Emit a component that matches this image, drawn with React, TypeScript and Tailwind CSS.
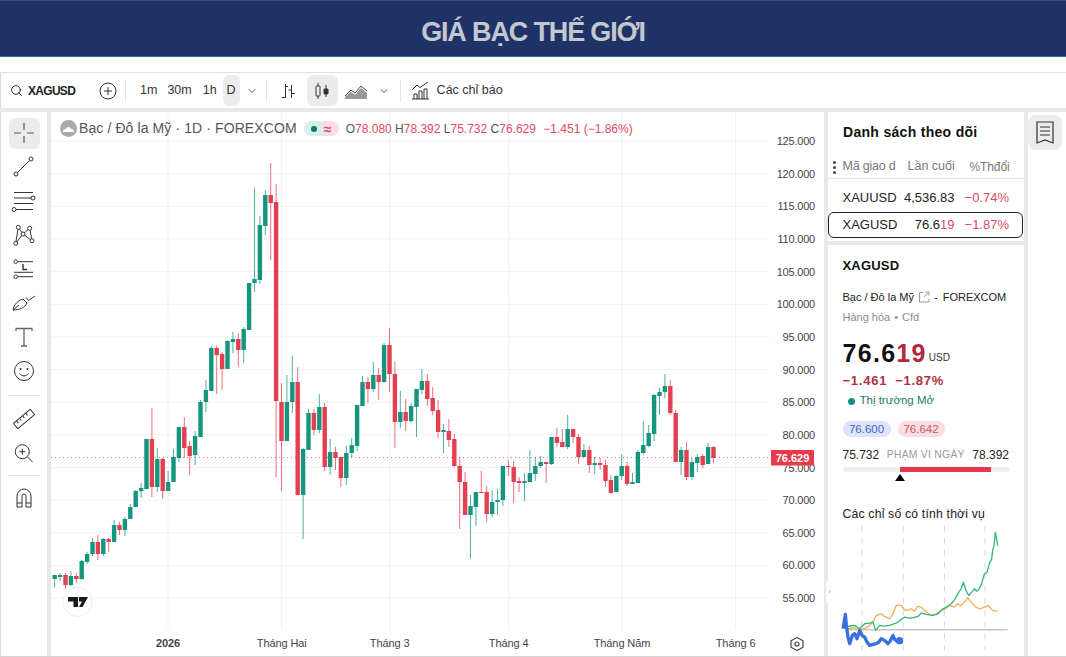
import { ChevronDown, Search } from 'lucide-react';

// top, bottom, wick top, wick bottom, 1 = green / 0 = red (y in page pixels)
const candles: [number, number, number, number, number][] = [
  [575, 579, 575, 587, 1], [575, 577, 573, 581, 1], [575, 585, 573, 589, 0], [576, 585, 571, 586, 1], [576, 579, 573, 583, 0],
  [561, 579, 560, 580, 1], [554, 562, 552, 564, 1], [542, 554, 538, 556, 1], [542, 554, 535, 560, 0], [539, 554, 538, 556, 1],
  [539, 542, 538, 552, 0], [525, 542, 520, 542, 1], [525, 530, 522, 535, 0], [519, 530, 517, 536, 1], [507, 519, 504, 519, 1],
  [491, 507, 490, 507, 1], [488, 491, 483, 498, 1], [439, 489, 439, 489, 1], [439, 487, 408, 497, 0], [459, 487, 448, 492, 1],
  [459, 491, 458, 499, 0], [482, 491, 471, 491, 1], [457, 482, 449, 482, 1], [427, 458, 427, 462, 1], [427, 448, 417, 458, 0],
  [446, 456, 441, 475, 0], [436, 455, 431, 465, 1], [402, 437, 400, 437, 1], [390, 402, 380, 412, 1], [348, 391, 346, 391, 1],
  [348, 355, 346, 394, 0], [354, 369, 352, 390, 0], [341, 369, 340, 369, 1], [339, 342, 332, 353, 1], [339, 350, 333, 367, 0],
  [329, 350, 327, 363, 1], [283, 330, 283, 330, 1], [279, 283, 188, 292, 1], [225, 280, 216, 284, 1], [195, 226, 190, 235, 1],
  [195, 203, 163, 260, 0], [202, 401, 184, 477, 0], [402, 441, 383, 491, 0], [402, 441, 375, 441, 1], [382, 402, 356, 413, 1],
  [382, 495, 367, 495, 0], [449, 495, 448, 539, 1], [413, 450, 409, 450, 1], [413, 430, 409, 435, 0], [407, 430, 394, 433, 1],
  [407, 467, 403, 471, 0], [452, 467, 439, 475, 1], [452, 458, 447, 470, 0], [457, 478, 457, 487, 0], [453, 478, 446, 485, 1],
  [445, 453, 438, 458, 1], [405, 446, 405, 451, 1], [382, 406, 376, 406, 1], [382, 389, 377, 403, 0], [375, 389, 362, 392, 1],
  [375, 382, 368, 400, 0], [345, 382, 343, 383, 1], [345, 374, 328, 392, 0], [374, 422, 362, 448, 0], [412, 422, 391, 428, 1],
  [412, 421, 399, 431, 0], [406, 421, 403, 423, 1], [389, 407, 389, 437, 1], [381, 390, 369, 394, 1], [381, 399, 374, 406, 0],
  [398, 411, 387, 415, 0], [410, 432, 400, 438, 0], [430, 432, 424, 453, 1], [431, 440, 419, 447, 0], [439, 466, 434, 467, 0],
  [466, 482, 457, 529, 0], [482, 515, 472, 515, 0], [506, 515, 495, 559, 1], [492, 507, 492, 526, 1], [492, 493, 471, 493, 0],
  [492, 514, 486, 522, 0], [502, 514, 490, 517, 1], [500, 502, 489, 515, 1], [466, 500, 466, 506, 1], [466, 467, 460, 476, 0],
  [467, 482, 461, 503, 0], [481, 483, 477, 492, 0], [481, 483, 473, 501, 1], [473, 482, 450, 482, 1], [466, 474, 457, 481, 1],
  [462, 466, 456, 468, 1], [462, 464, 462, 483, 0], [437, 464, 437, 465, 1], [437, 443, 428, 447, 0], [442, 447, 429, 447, 0],
  [429, 447, 415, 449, 1], [429, 437, 429, 443, 0], [437, 457, 434, 464, 0], [450, 457, 444, 457, 1], [450, 465, 446, 473, 0],
  [463, 465, 457, 474, 1], [463, 465, 458, 470, 0], [465, 481, 460, 487, 0], [480, 493, 475, 494, 0], [476, 492, 475, 492, 1],
  [466, 476, 454, 480, 1], [466, 484, 462, 486, 0], [482, 484, 473, 484, 1], [452, 483, 450, 483, 1], [445, 453, 421, 455, 1],
  [433, 446, 425, 447, 1], [395, 434, 394, 441, 1], [392, 396, 388, 415, 1], [386, 392, 374, 398, 1], [386, 413, 380, 415, 0],
  [413, 462, 410, 462, 0], [450, 462, 447, 475, 1], [450, 477, 442, 480, 0], [462, 477, 458, 480, 1], [457, 463, 454, 472, 1],
  [456, 465, 454, 468, 0], [447, 464, 443, 464, 1], [447, 458, 446, 463, 0],
];

const priceLabels = ['125.000', '120.000', '115.000', '110.000', '105.000', '100.000', '95.000', '90.000', '85.000', '80.000', '75.000', '70.000', '65.000', '60.000', '55.000'];
const timeLabels: [number, string, boolean][] = [[168, '2026', true], [281.7, 'Tháng Hai', false], [389.7, 'Tháng 3', false], [508.7, 'Tháng 4', false], [622, 'Tháng Năm', false], [735.6, 'Tháng 6', false]];

const greenLine = '65,398 75,396 85,395 100,405 115,390 130,388 140,385 148,410 160,395 175,397 190,395 205,390 215,385 235,370 250,373 260,372 275,368 285,358 300,362 320,365 335,360 350,345 365,338 375,330 385,318 395,300 405,285 412,265 420,290 428,305 437,295 445,285 452,292 460,285 468,265 475,240 483,235 490,210 497,195 500,170 505,150 508,115 512,135 515,155';
const orangeLine = '65,405 80,402 100,408 115,405 130,395 140,385 150,365 165,360 175,368 190,375 200,360 210,335 225,335 235,348 245,350 255,345 265,352 275,338 285,340 295,350 305,358 315,365 330,360 345,350 358,345 370,335 385,340 395,330 405,335 415,325 425,312 435,325 450,340 460,345 470,342 487,335 495,345 500,350 515,353';
const blueLine = '50,405 54,380 57,362 60,395 65,430 70,450 78,425 85,420 92,435 100,410 107,425 115,430 122,445 130,455 140,452 150,450 158,445 165,435 175,440 185,450 192,442 200,425 206,438 212,442 225,441';

const Tool = ({ children }: { children: React.ReactNode }) => (
  <div className="h-[34px] w-full flex items-center justify-center">
    <svg width="28" height="28" viewBox="0 0 28 28" fill="none" stroke="#333" strokeWidth="1">{children}</svg>
  </div>
);

const ToolBar = () => (
  <div className="w-[47px] shrink-0 bg-white border-l border-[#d9d9d9] flex flex-col items-center pt-1">
    <div className="h-[34px] w-full flex items-center justify-center">
      <div className="w-[31px] h-[31px] rounded-md bg-[#ececec] flex items-center justify-center">
        <svg width="24" height="24" viewBox="0 0 24 24" stroke="#555" strokeWidth="1.2">
          <path d="M12 2v7M12 15v7M2 12h7M15 12h7" />
        </svg>
      </div>
    </div>
    <Tool>
      <path d="M7.5 19.5L19.5 7.5" />
      <circle cx="6" cy="21" r="2" />
      <circle cx="21" cy="6" r="2" />
    </Tool>
    <Tool>
      <path d="M4 5.5h19M4 11h17M4 16.5h19M6 22.5h17" />
      <circle cx="23" cy="11" r="2" fill="#fff" />
      <circle cx="4" cy="22.5" r="2" fill="#fff" />
    </Tool>
    <Tool>
      <path d="M5.7 22.3L8.3 6.3L13 13L19.7 7.3L22 19.7L13 13L5.7 22.3" />
      <circle cx="8.3" cy="6.3" r="2" fill="#fff" />
      <circle cx="19.7" cy="7.3" r="2" fill="#fff" />
      <circle cx="5.7" cy="22.3" r="2" fill="#fff" />
      <circle cx="22" cy="19.7" r="2" fill="#fff" />
      <circle cx="13" cy="13" r="2" fill="#fff" />
    </Tool>
    <Tool>
      <path d="M8 6.7h15M4 17.3h19M8 21.7h15" />
      <circle cx="5.7" cy="6.7" r="1.8" />
      <circle cx="5.7" cy="21.7" r="1.8" />
      <path d="M13 9v5.5h4" strokeWidth="1.4" />
    </Tool>
    <Tool>
      <path d="M3 21C4 15 9 11 13 10l4 4C15 19 9 21 3 21z" />
      <path d="M3 21l6-5M16 8.5l2.5 3L25 7" />
    </Tool>
    <Tool>
      <path d="M6 8V5.5h16V8M14 5.5V23M11 23h6" stroke="#666" strokeWidth="1.3" />
    </Tool>
    <Tool>
      <circle cx="14" cy="14" r="9.5" />
      <circle cx="10.5" cy="12" r="1" fill="#333" stroke="none" />
      <circle cx="17.5" cy="12" r="1" fill="#333" stroke="none" />
      <path d="M9.5 16.5c2 3 7 3 9 0" />
    </Tool>
    <div className="mt-[7px] mb-[6px] h-px w-[32px] bg-[#e3e3e3]" />
    <Tool>
      <g transform="rotate(-40 14 14)">
        <rect x="3" y="10.5" width="22" height="7" rx="0.5" />
        <path d="M7 10.5v3M11 10.5v3M15 10.5v3M19 10.5v3" />
      </g>
    </Tool>
    <Tool>
      <circle cx="12.3" cy="12.7" r="7" />
      <path d="M9.3 12.7h6M12.3 9.7v6M17.5 18l5 5" />
    </Tool>
    <div className="mt-[5px] mb-[5px] h-px w-[32px] bg-[#e3e3e3]" />
    <Tool>
      <path d="M7 23V12a7 7 0 0 1 14 0v11h-5V12a2 2 0 0 0-4 0v11z" />
      <path d="M7 19h5M16 19h5" />
    </Tool>
  </div>
);

const Chart = () => (
  <div className="relative w-[773px] shrink-0 bg-white">
    <svg className="block" width="773" height="544" viewBox="51 112 773 544">
      {priceLabels.map((_, i) => (
        <line key={i} x1="51" x2="770" y1={141 + i * 32.65} y2={141 + i * 32.65} stroke="#f2f3f5" />
      ))}
      {timeLabels.map(([x], i) => (
        <line key={i} x1={x} x2={x} y1="112" y2="630" stroke="#f0f1f3" />
      ))}
      <line x1="51" x2="771" y1="457.5" y2="457.5" stroke="#f0727e" strokeDasharray="1 3" />
      {candles.map(([top, bottom, wickTop, wickBottom, green], i) => {
        const x = 54.7 + i * 5.4;
        const color = green ? '#14957e' : '#e43f50';
        return (
          <g key={i} fill={color}>
            <rect x={x - 0.5} y={wickTop} width="1" height={wickBottom - wickTop} opacity="0.75" />
            <rect x={x - 2.2} y={top} width="4.4" height={bottom - top} />
          </g>
        );
      })}
      {priceLabels.map((label, i) => (
        <text key={label} x="815" y={145 + i * 32.65} textAnchor="end" fontSize="11" letterSpacing="-0.2" fill="#444">{label}</text>
      ))}
      <rect x="771" y="450" width="43" height="15.5" fill="#e83a4c" />
      <text x="792.5" y="461.5" textAnchor="middle" fontSize="11" fontWeight="700" fill="#fff">76.629</text>
      {timeLabels.map(([x, label, bold]) => (
        <text key={label} x={x} y="647" textAnchor="middle" fontSize="11" fontWeight={bold ? 700 : 400} letterSpacing="-0.1" fill="#444">{label}</text>
      ))}
      <path d="M797 637.5l6 3.3v6.4l-6 3.3l-6-3.3v-6.4z" fill="none" stroke="#444" strokeWidth="1.2" strokeLinejoin="round" />
      <circle cx="797" cy="644" r="2" fill="none" stroke="#444" strokeWidth="1.2" />
      <circle cx="77.5" cy="602" r="14.5" fill="#fff" stroke="#eeeeee" />
      <path d="M68 597h10v10h-4.5v-5.5H68zM79 597h9l-5.5 10h-3.5l3-5.5h-3z" fill="#1a1a1a" />
      <circle cx="81.5" cy="599.5" r="1.8" fill="#1a1a1a" />
    </svg>
    <div className="absolute left-[9px] top-[6px] flex items-center whitespace-nowrap">
      <div className="w-[17px] h-[17px] rounded-full bg-[#a9a9ae] flex items-center justify-center">
        <svg width="11" height="7" viewBox="0 0 11 7"><path d="M0 7a3 3 0 0 1 3-3a2.6 2.6 0 0 1 5 0a3 3 0 0 1 3 3z" fill="#fff" /></svg>
      </div>
      <span className="ml-[2px] text-[14px] text-[#555] tracking-[0.1px]">Bạc / Đô la Mỹ · 1D · FOREXCOM</span>
      <span className="ml-[7px] h-[15px] w-[35px] rounded-full bg-[linear-gradient(90deg,#d5efe9_50%,#fbdde6_50%)] flex items-center justify-center gap-[7px]">
        <span className="w-[6px] h-[6px] rounded-full bg-[#0b7b66]" />
        <span className="text-[14px] leading-none font-bold text-[#d14a72]">≈</span>
      </span>
      <span className="ml-[7px] text-[12px] text-[#df4a60]">
        <span className="text-[#555]">O</span>78.080 <span className="text-[#555]">H</span>78.392 <span className="text-[#555]">L</span>75.732 <span className="text-[#555]">C</span>76.629 <span className="ml-[4px]">−1.451 (−1.86%)</span>
      </span>
    </div>
  </div>
);

const Side = () => (
  <div className="w-[196px] shrink-0 flex flex-col gap-1 bg-[#e9e9ea]">
    <div className="h-[129px] bg-white">
      <div className="pl-[15px] pt-3 text-[14px] leading-[17px] font-bold text-[#111] tracking-[0.3px]">Danh sách theo dõi</div>
      <div className="relative mt-[18px] h-[20px] flex items-center pl-[14.5px] text-[12.5px] text-[#777] border-b border-[#e6e6e6] pb-1">
        <span className="absolute left-[5px] top-[2px] flex flex-col gap-[2px]">
          <i className="block w-[3px] h-[3px] rounded-full bg-[#444]" />
          <i className="block w-[3px] h-[3px] rounded-full bg-[#444]" />
          <i className="block w-[3px] h-[3px] rounded-full bg-[#444]" />
        </span>
        <span className="w-[65px] overflow-hidden whitespace-nowrap tracking-[-0.2px]">Mã giao d</span>
        <span className="w-[62px]">Lần cuối</span>
        <span className="text-[12px] tracking-[-0.1px]">%Thđổi</span>
      </div>
      <div className="mt-[8px] h-[22px] flex items-center pl-[14.5px] pr-[15px] justify-between text-[13px] text-[#222]">
        <span className="w-[60px]">XAUUSD</span>
        <span className="ml-auto">4,536.83</span>
        <span className="ml-[10px] text-[#de4a5e]">−0.74%</span>
      </div>
      <div className="mt-[3px] h-[26px] w-[195px] rounded-md border border-[#222] flex items-center pl-[13.5px] pr-[13px] text-[13px] text-[#222]">
        <span>XAGUSD</span>
        <span className="ml-auto">76.6<span className="text-[#de4a5e]">19</span></span>
        <span className="ml-[10px] text-[#de4a5e]">−1.87%</span>
      </div>
    </div>
    <div className="relative flex-1 bg-white pl-[14.5px] pr-[15px]">
      <div className="pt-[13px] text-[13px] leading-4 font-bold text-[#111] tracking-[0.2px]">XAGUSD</div>
      <div className="mt-[15px] h-4 flex items-center text-[11px] text-[#222] whitespace-nowrap">
        Bạc / Đô la Mỹ
        <svg className="ml-[4px]" width="12" height="12" viewBox="0 0 12 12" fill="none" stroke="#999">
          <path d="M5 1.5H1.5v9.5h9.5V8M6 6l5-5M7.5 1H11v3.5" />
        </svg>
        <span className="ml-[4px]">-</span>
        <span className="ml-[5px]">FOREXCOM</span>
      </div>
      <div className="mt-[4px] h-4 flex items-center text-[11px] text-[#8c8c8c]">
        Hàng hóa
        <span className="mx-[4px]">•</span>
        Cfd
      </div>
      <div className="mt-[14px] h-7 flex items-end">
        <span className="text-[25px] leading-7 font-bold text-[#111] tracking-[1.3px]">76.6<span className="text-[#b02a3c]">19</span></span>
        <span className="ml-[2px] text-[10px] leading-[18px] text-[#333]">USD</span>
      </div>
      <div className="mt-[6px] h-4 text-[13px] leading-4 font-bold text-[#b0303f] tracking-[0.75px] whitespace-nowrap">
        −1.461<span className="ml-[8px]">−1.87%</span>
      </div>
      <div className="mt-[4px] h-4 flex items-center text-[11.5px] text-[#1c7a68]">
        <span className="ml-[5px] w-[7px] h-[7px] rounded-full bg-[#16907a]" />
        <span className="ml-[5px]">Thị trường Mở</span>
      </div>
      <div className="mt-[12px] flex gap-[7px] text-[11.5px] leading-[16px]">
        <span className="w-[48px] text-center rounded-full bg-[#dce5fb] text-[#4863c6]">76.600</span>
        <span className="w-[47px] text-center rounded-full bg-[#fadee1] text-[#c95966]">76.642</span>
      </div>
      <div className="mt-[10px] h-4 flex items-center justify-between text-[12px] text-[#222]">
        <span>75.732</span>
        <span className="text-[10.3px] text-[#999] tracking-[0.3px]">PHẠM VI NGÀY</span>
        <span>78.392</span>
      </div>
      <div className="relative mt-[4px] h-[5px] w-[167px] bg-[#efefef] rounded-sm">
        <div className="absolute left-[57px] top-0 h-[5px] w-[91px] bg-[#e23a4a]" />
        <div className="absolute left-[52px] top-[7px] w-0 h-0 border-x-[5px] border-x-transparent border-b-[7px] border-b-black" />
      </div>
      <div className="mt-[34px] h-4 text-[12.2px] leading-4 text-[#222] tracking-[0.2px]">Các chỉ số có tính thời vụ</div>
      <svg className="mt-[2px] -ml-[6.5px] block" width="177" height="128" viewBox="30 90 530 385" fill="none">
        {[107, 231, 355, 477].map((x) => (
          <line key={x} x1={x} x2={x} y1="95" y2="470" stroke="#d8d8d8" strokeWidth="3" strokeDasharray="18 18" />
        ))}
        <line x1="60" x2="545" y1="408" y2="408" stroke="#c8c8c8" strokeWidth="4" />
        <polyline points={orangeLine} stroke="#f2ae55" strokeWidth="4" strokeLinejoin="round" />
        <polyline points={greenLine} stroke="#2fbb72" strokeWidth="4" strokeLinejoin="round" />
        <polyline points={blueLine} stroke="#3a6fe2" strokeWidth="10" strokeLinejoin="round" />
        <circle cx="220" cy="441" r="11" fill="#3a6fe2" />
      </svg>
      <div className="absolute -left-[2px] top-[336px] w-[7px] h-[22px] bg-white rounded-r flex items-center justify-center text-[8px] text-[#aaa]">›</div>
    </div>
  </div>
);

const App = () => {
  return (
    <div className="h-[657px] w-[1066px] overflow-hidden bg-white font-['Liberation_Sans',Arial,sans-serif]">
      <div className="h-[57px] pt-[8px] bg-[#1f3265] border-t border-[#3c4c78] border-b border-b-[#2a6f9c] flex items-center justify-center">
        <h1 className="text-[27px] font-bold text-[#c3c7cf] tracking-[-1.15px]">GIÁ BẠC THẾ GIỚI</h1>
      </div>
      <div className="mt-[15px] h-[585px] flex flex-col bg-[#e9e9ea] border-t border-[#e0e0e0] border-b border-b-[#d5d5d5]">
        <div className="h-[35px] shrink-0 flex items-center bg-white border-l border-[#d9d9d9] text-[12.5px] text-[#333]">
          <Search className="ml-[9px] shrink-0" size={13} strokeWidth={1.7} color="#222" />
          <span className="ml-[5px] w-[71px] text-[12px] font-bold text-[#222] tracking-[-0.7px]">XAGUSD</span>
          <svg width="18" height="18" viewBox="0 0 18 18" fill="none" stroke="#333" className="shrink-0">
            <circle cx="9" cy="9" r="8" />
            <path d="M9 5v8M5 9h8" />
          </svg>
          <i className="ml-[8px] h-[22px] w-px bg-[#e5e5e5]" />
          <span className="ml-[14px]">1m</span>
          <span className="ml-[10px]">30m</span>
          <span className="ml-[11px]">1h</span>
          <span className="ml-[6px] w-[17px] h-[31px] rounded-md bg-[#ececec] flex items-center justify-center">D</span>
          <ChevronDown className="ml-[6px] shrink-0" size={12} color="#555" />
          <i className="ml-[8px] h-[22px] w-px bg-[#e5e5e5]" />
          <svg className="ml-[12px] shrink-0" width="18" height="18" viewBox="0 0 18 18" fill="none" stroke="#333">
            <path d="M6.5 2v14M3 15.5h3.5M6.5 4.5H9M12.5 3v13M9.5 8h3M12.5 11.5H16" />
          </svg>
          <span className="ml-[10px] w-[31px] h-[31px] rounded-md bg-[#ececec] flex items-center justify-center">
            <svg width="18" height="18" viewBox="0 0 18 18" fill="none" stroke="#333">
              <path d="M5 1v3M5 14v3M13 3v4M13 12v3" />
              <rect x="3" y="4" width="4" height="10" rx="0.5" />
              <rect x="11" y="7" width="4" height="5" rx="0.5" fill="#333" />
            </svg>
          </span>
          <svg className="ml-[6px] shrink-0" width="24" height="18" viewBox="0 0 24 18" fill="none" stroke="#444">
            <path d="M1 14l6-6l4 3l6-7l6 5" />
            <path d="M1 17v-2l6-5l4 3l6-7l6 5v6z" fill="#999" stroke="none" />
          </svg>
          <ChevronDown className="ml-[10px] shrink-0" size={12} color="#555" />
          <i className="ml-[10px] h-[22px] w-px bg-[#e5e5e5]" />
          <svg className="ml-[10px] shrink-0" width="19" height="19" viewBox="0 0 19 19" fill="none" stroke="#333">
            <path d="M1 18h17M3 18v-5h3v5M8 18V10h3v8M13 18V8h3v10M1 9l5-5l3 2.5L17 1" />
          </svg>
          <span className="ml-[7px]">Các chỉ báo</span>
        </div>
        <div className="flex-1 min-h-0 flex gap-1 pt-1">
          <ToolBar />
          <Chart />
          <Side />
          <div className="flex-1 bg-white pt-[3px] pr-1">
            <div className="w-[34px] h-[35px] rounded-lg bg-[#ececec] flex items-center justify-center">
              <svg width="24" height="26" viewBox="0 0 24 26" fill="none" stroke="#333" strokeWidth="1.2">
                <path d="M4 2h16v21l-8-3l-8 3zM7 7h10M7 11h10M7 15h10" />
              </svg>
            </div>
          </div>
        </div>
      </div>
    </div>
  );
};

export default App;
